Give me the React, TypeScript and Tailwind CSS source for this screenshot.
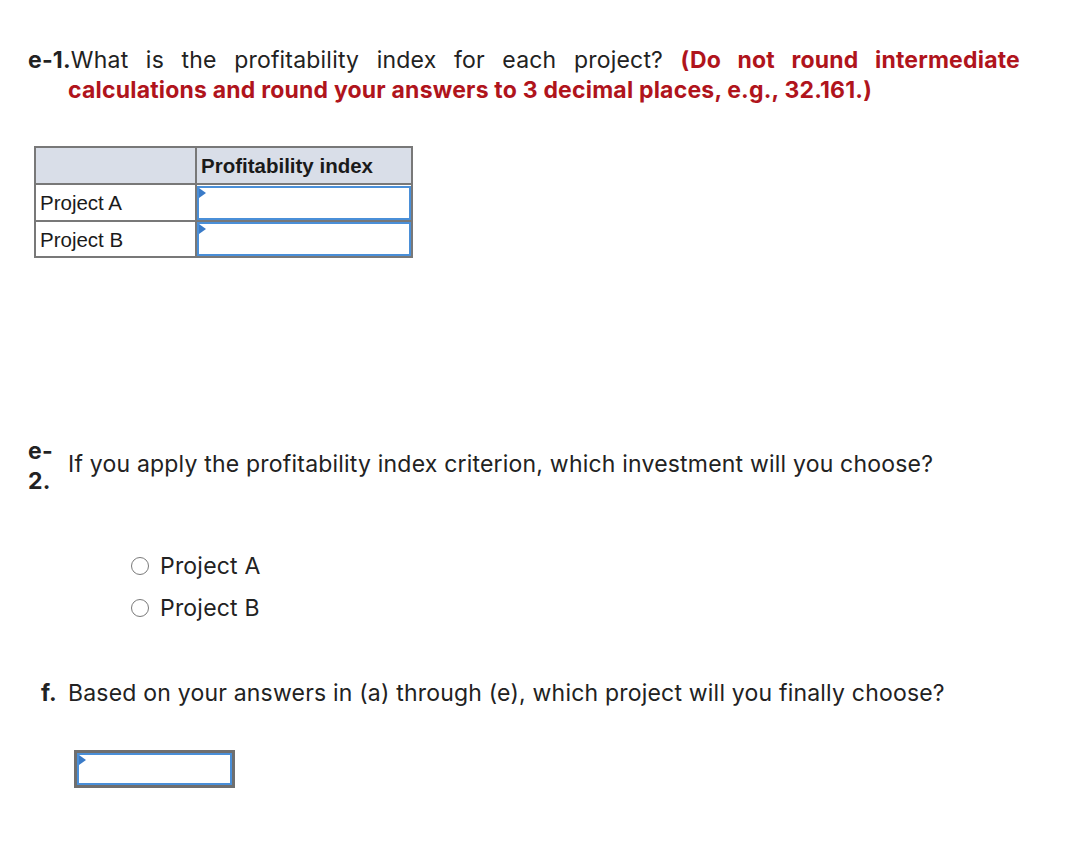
import type { ReactNode } from 'react';

const body = "font-['Inter','Open_Sans',sans-serif] text-[23px] leading-[30px] tracking-[0.2px] text-[#222]";
const cellBorder = 'border-2 border-[#787878]';

const rows = [
  { name: 'Project A', h: 'h-[37px]' },
  { name: 'Project B', h: 'h-[36px]' },
];

const AnswerBox = ({ className }: { className: string }) => (
  <div className={`relative bg-white ${className}`}>
    {/* the little marker in the corner of every answer field */}
    <span className="absolute left-0 top-0 h-0 w-0 border-y-[5px] border-l-[7px] border-y-transparent border-l-[#3a7bc8]" />
  </div>
);

const Radio = ({ children }: { children: ReactNode }) => (
  <label className="flex h-[42px] items-center gap-[11px]">
    <span className="h-[18px] w-[18px] rounded-full border border-[#7a7a7a] bg-white" />
    <span>{children}</span>
  </label>
);

export default function App() {
  return (
    <div className={`min-h-[842px] w-[1072px] bg-white pt-[45px] ${body}`}>
      <p className="ml-[28px] w-[992px] pl-10 -indent-10 text-justify [text-align-last:left]">
        <span className="font-bold">e-1.</span>What is the profitability index for each project?{' '}
        <span className="font-bold text-[#b0141c]">
          (Do not round intermediate calculations and round your answers to 3 decimal places, e.g., 32.161.)
        </span>
      </p>

      <table className="ml-[34px] mt-[41px] border-collapse font-['Liberation_Sans',Arial,sans-serif] text-[20.5px] leading-[22px] tracking-normal text-[#1a1a1a]">
        <thead>
          <tr className="h-[37px] bg-[#d9dee8]">
            <th className={`w-[161px] ${cellBorder}`} />
            <th className={`w-[216px] px-[4px] text-left font-bold ${cellBorder}`}>Profitability index</th>
          </tr>
        </thead>
        <tbody>
          {rows.map((r) => (
            <tr key={r.name} className={r.h}>
              <td className={`px-[4px] pt-[1px] ${cellBorder}`}>{r.name}</td>
              <td className={`p-0 ${cellBorder}`}>
                <AnswerBox className="h-[34px] w-full border-2 border-[#4a8fd8]" />
              </td>
            </tr>
          ))}
        </tbody>
      </table>

      <div className="ml-[28px] mt-[178px] flex items-center">
        <div className="w-10 font-bold">
          e-
          <br />
          2.
        </div>
        <p className="pb-[4px]">If you apply the profitability index criterion, which investment will you choose?</p>
      </div>

      <div className="ml-[131px] mt-[49px] flex flex-col">
        <Radio>Project A</Radio>
        <Radio>Project B</Radio>
      </div>

      <div className="ml-[28px] mt-[49px] flex">
        <div className="w-10 pl-[13px] font-bold">f.</div>
        <p>Based on your answers in (a) through (e), which project will you finally choose?</p>
      </div>

      <div className="ml-[74px] mt-[42px] h-[38px] w-[161px] border-[3px] border-[#6f6f6f]">
        <AnswerBox className="h-full w-full border-2 border-[#4a8fd8]" />
      </div>
    </div>
  );
}
